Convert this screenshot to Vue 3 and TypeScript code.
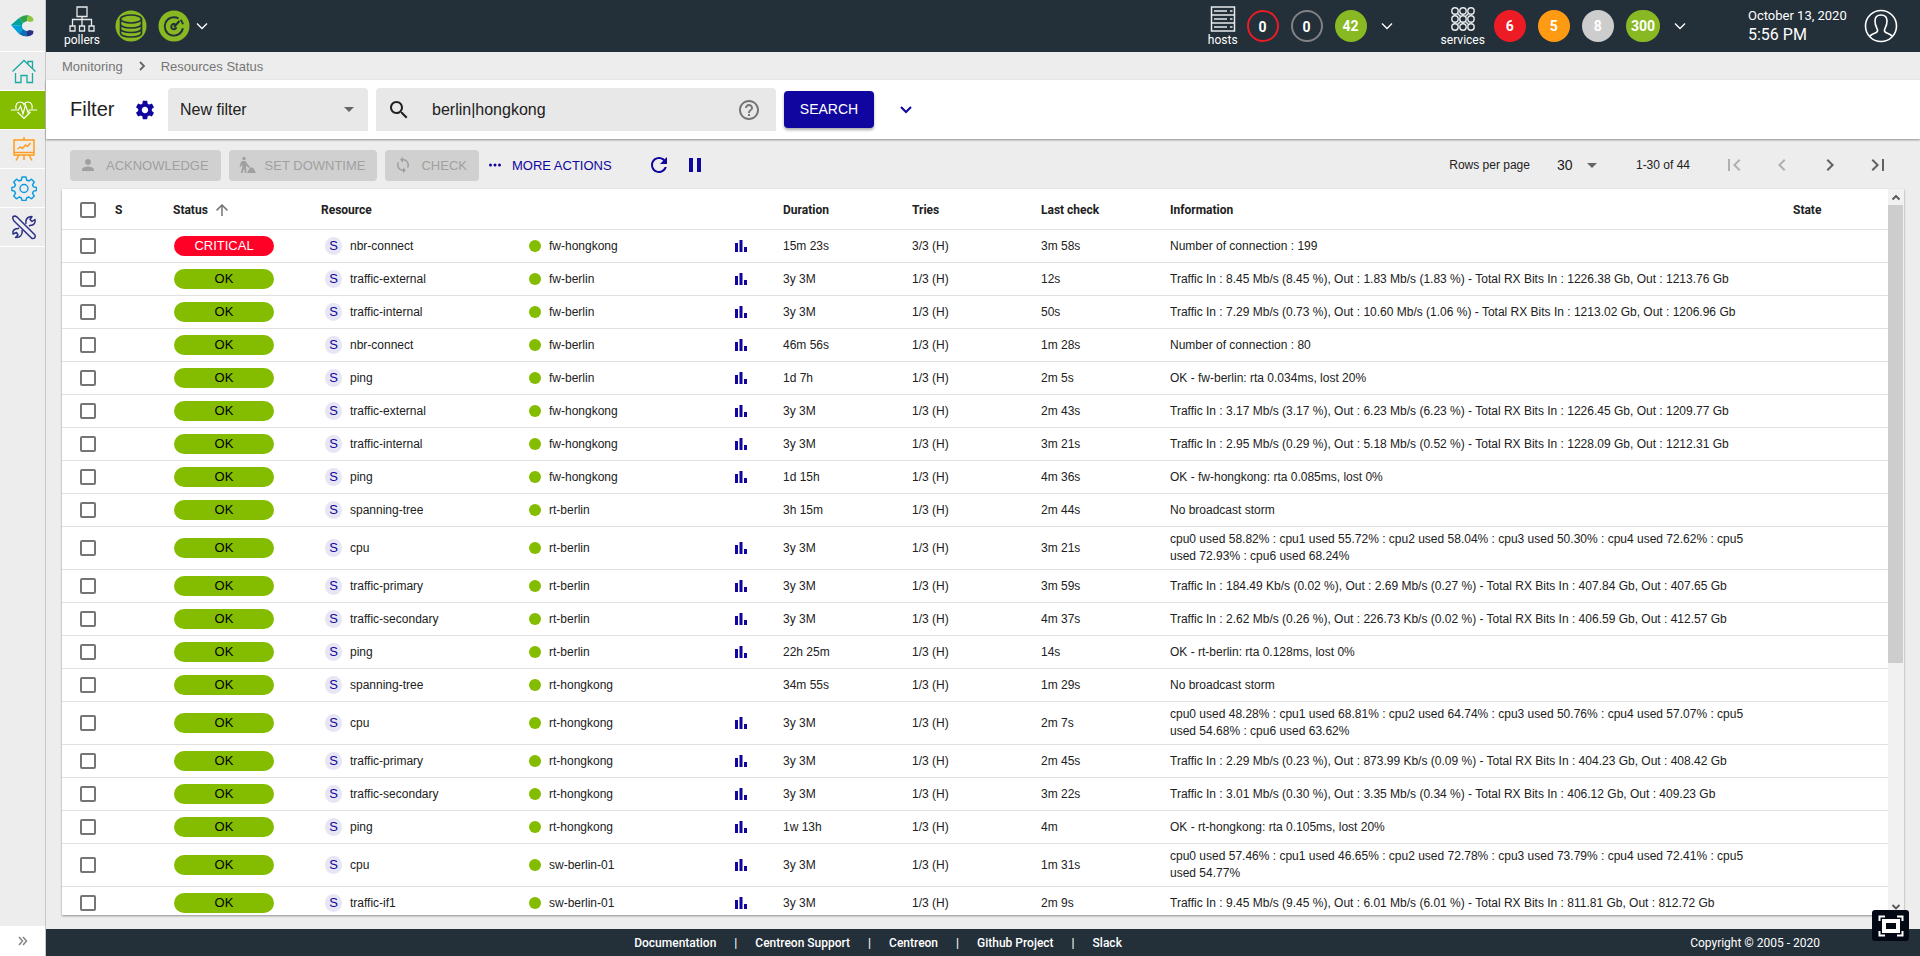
<script setup lang="ts">
import { ref } from 'vue'

interface Resource {
  status: 'CRITICAL' | 'OK'
  name: string
  parent: string
  graph: boolean
  duration: string
  tries: string
  lastCheck: string
  information: string
}

function row(
  name: string,
  parent: string,
  duration: string,
  lastCheck: string,
  information: string,
  graph = true,
  status: Resource['status'] = 'OK',
  tries = '1/3 (H)',
): Resource {
  return { status, name, parent, graph, duration, tries, lastCheck, information }
}

const resources: Resource[] = [
  row('nbr-connect', 'fw-hongkong', '15m 23s', '3m 58s', 'Number of connection : 199', true, 'CRITICAL', '3/3 (H)'),
  row('traffic-external', 'fw-berlin', '3y 3M', '12s', 'Traffic In : 8.45 Mb/s (8.45 %), Out : 1.83 Mb/s (1.83 %) - Total RX Bits In : 1226.38 Gb, Out : 1213.76 Gb'),
  row('traffic-internal', 'fw-berlin', '3y 3M', '50s', 'Traffic In : 7.29 Mb/s (0.73 %), Out : 10.60 Mb/s (1.06 %) - Total RX Bits In : 1213.02 Gb, Out : 1206.96 Gb'),
  row('nbr-connect', 'fw-berlin', '46m 56s', '1m 28s', 'Number of connection : 80'),
  row('ping', 'fw-berlin', '1d 7h', '2m 5s', 'OK - fw-berlin: rta 0.034ms, lost 20%'),
  row('traffic-external', 'fw-hongkong', '3y 3M', '2m 43s', 'Traffic In : 3.17 Mb/s (3.17 %), Out : 6.23 Mb/s (6.23 %) - Total RX Bits In : 1226.45 Gb, Out : 1209.77 Gb'),
  row('traffic-internal', 'fw-hongkong', '3y 3M', '3m 21s', 'Traffic In : 2.95 Mb/s (0.29 %), Out : 5.18 Mb/s (0.52 %) - Total RX Bits In : 1228.09 Gb, Out : 1212.31 Gb'),
  row('ping', 'fw-hongkong', '1d 15h', '4m 36s', 'OK - fw-hongkong: rta 0.085ms, lost 0%'),
  row('spanning-tree', 'rt-berlin', '3h 15m', '2m 44s', 'No broadcast storm', false),
  row('cpu', 'rt-berlin', '3y 3M', '3m 21s', 'cpu0 used 58.82% : cpu1 used 55.72% : cpu2 used 58.04% : cpu3 used 50.30% : cpu4 used 72.62% : cpu5 used 72.93% : cpu6 used 68.24%'),
  row('traffic-primary', 'rt-berlin', '3y 3M', '3m 59s', 'Traffic In : 184.49 Kb/s (0.02 %), Out : 2.69 Mb/s (0.27 %) - Total RX Bits In : 407.84 Gb, Out : 407.65 Gb'),
  row('traffic-secondary', 'rt-berlin', '3y 3M', '4m 37s', 'Traffic In : 2.62 Mb/s (0.26 %), Out : 226.73 Kb/s (0.02 %) - Total RX Bits In : 406.59 Gb, Out : 412.57 Gb'),
  row('ping', 'rt-berlin', '22h 25m', '14s', 'OK - rt-berlin: rta 0.128ms, lost 0%'),
  row('spanning-tree', 'rt-hongkong', '34m 55s', '1m 29s', 'No broadcast storm', false),
  row('cpu', 'rt-hongkong', '3y 3M', '2m 7s', 'cpu0 used 48.28% : cpu1 used 68.81% : cpu2 used 64.74% : cpu3 used 50.76% : cpu4 used 57.07% : cpu5 used 54.68% : cpu6 used 63.62%'),
  row('traffic-primary', 'rt-hongkong', '3y 3M', '2m 45s', 'Traffic In : 2.29 Mb/s (0.23 %), Out : 873.99 Kb/s (0.09 %) - Total RX Bits In : 404.23 Gb, Out : 408.42 Gb'),
  row('traffic-secondary', 'rt-hongkong', '3y 3M', '3m 22s', 'Traffic In : 3.01 Mb/s (0.30 %), Out : 3.35 Mb/s (0.34 %) - Total RX Bits In : 406.12 Gb, Out : 409.23 Gb'),
  row('ping', 'rt-hongkong', '1w 13h', '4m', 'OK - rt-hongkong: rta 0.105ms, lost 20%'),
  row('cpu', 'sw-berlin-01', '3y 3M', '1m 31s', 'cpu0 used 57.46% : cpu1 used 46.65% : cpu2 used 72.78% : cpu3 used 73.79% : cpu4 used 72.41% : cpu5 used 54.77%'),
  row('traffic-if1', 'sw-berlin-01', '3y 3M', '2m 9s', 'Traffic In : 9.45 Mb/s (9.45 %), Out : 6.01 Mb/s (6.01 %) - Total RX Bits In : 811.81 Gb, Out : 812.72 Gb'),
]

const query = ref('berlin|hongkong')
const filter = ref('New filter')
const perPage = ref(30)
const footerLinks = ['Documentation', 'Centreon Support', 'Centreon', 'Github Project', 'Slack']
const serviceDots = [5, 13, 21]
</script>

<template>
  <div class="app">
    <nav class="side" aria-label="Main">
      <a href="#" class="logo" aria-label="Centreon">
        <svg width="24" height="22" viewBox="0 0 24 22">
          <path d="M8 3 Q12 0 17 0 L16 6 L12 8 Z" fill="#2fa14a" />
          <path d="M17 0 Q20 1 22 3 L22.500 6 L19 7 L16 6 Z" fill="#8cc63f" />
          <path d="M0 10 L8 3 L12 8 Q11 9 11 11 Z" fill="#00a39a" />
          <path d="M0 10 L11 11 Q11 13 12 14 L8 19 Z" fill="#00a0df" />
          <path d="M8 19 L12 14 Q14 16 16 16 L16 21.500 Q12 21.500 8 19 Z" fill="#0b6fb8" />
          <path d="M16 16 L19 15 L22.500 16 L22 19 Q20 21 16 21.500 Z" fill="#2b2f86" />
        </svg>
      </a>
      <a href="#" class="item" aria-label="Home">
        <svg width="26" height="26" viewBox="0 0 26 26" fill="none" stroke="#1ba9a0" stroke-width="1.3">
          <path d="M1.500 13.500 L13 2.500 L24.500 13.500 M17 6 V3.500 h4.500 v7 M4.500 15 V24.500 h5.500 v-7 h6 V24.500 h5.500 v-9.500" />
        </svg>
      </a>
      <a href="#" class="item active" aria-label="Monitoring">
        <svg width="26" height="26" viewBox="0 0 26 26" fill="none" stroke="#fff" stroke-width="1.2">
          <path d="M5 12 C4 7 7 5 9 5 c2 0 3.500 1 4 2.500 C13.500 6 15 5 17 5 c3 0 5 3 4 7 M6.500 15 L13 21.500 L19.500 15" />
          <path d="M0 13 h7.500 l2-4 l2.500 8 l2.500-9 l2.500 7.500 l1.500-2.500 H26" />
        </svg>
      </a>
      <a href="#" class="item" aria-label="Reporting">
        <svg width="26" height="26" viewBox="0 0 26 26" fill="none" stroke="#ff9c1b" stroke-width="1.5">
          <path d="M3 4 h20 v15 H3 z M3 16.500 h20 M13 1 v3 M8 19 l-3 5.500 M18 19 l3 5.500 M13 19 v5" />
          <path d="M6.500 13 l3-2 l2 1.500 l3-3.500 l2 1.500 l3-3.500" />
        </svg>
      </a>
      <a href="#" class="item" aria-label="Configuration">
        <svg width="26" height="26" viewBox="0 0 26 26" fill="none" stroke="#0d9be0" stroke-width="1.4" stroke-linejoin="round">
          <path d="M11 2 h4 l.6 3 2.300 1 2.600-1.800 2.800 2.800 -1.800 2.600 1 2.300 3 .6 v3 l-3 .6 -1 2.300 1.800 2.600 -2.800 2.800 -2.600-1.800 -2.300 1 -.6 2.500 h-4 l-.6-2.500 -2.300-1 -2.600 1.800 -2.800-2.800 1.800-2.600 -1-2.300 -2.600-.6 v-3 l2.600-.6 1-2.300 -1.800-2.600 2.800-2.800 2.600 1.800 2.300-1 z" />
          <circle cx="13" cy="13.500" r="4" />
        </svg>
      </a>
      <a href="#" class="item" aria-label="Administration">
        <svg width="26" height="26" viewBox="0 0 26 26" fill="none" stroke="#2b2f86" stroke-width="1.500" stroke-linejoin="round">
          <path d="M2 5 Q1 2 4 2 L6 3 L24 21 Q25 25 21 24.500 L3 7 Z" />
          <path d="M15 10 Q14 5 18 3 L21 2.500 L19 5.500 L21 7.500 L24 5.500 Q25 11 19 11.500 L18 12 M11 16 Q12 21 8 23 L4.500 23.500 L7 21 L5.500 18.500 L2 20 Q1 15 7 14.500 L8 14" />
        </svg>
      </a>
      <button class="expand" aria-label="Expand menu">
        <svg width="10" height="10" viewBox="0 0 10 10" fill="none" stroke="#888" stroke-width="1.600"><path d="M1 1 l3.500 4 L1 9 M5 1 l3.500 4 L5 9" /></svg>
      </button>
    </nav>

    <div class="page">
      <header class="top">
        <div class="group pollers">
          <a href="#" class="labelled">
            <svg width="26" height="26" viewBox="0 0 26 26" fill="none" stroke="#e8eaec" stroke-width="1.300">
              <path d="M8 1 h10 v9.500 H8 z M13 10.500 V20 M3.500 20 v-6.500 h19 V20 M1 20 h5 v5 H1 z M10.500 20 h5 v5 h-5 z M20 20 h5 v5 h-5 z" />
            </svg>
            <span>pollers</span>
          </a>
          <a href="#" class="round" aria-label="Database">
            <svg width="32" height="32" viewBox="0 0 32 32">
              <circle cx="16" cy="16" r="15.500" fill="#88b922" />
              <g fill="none" stroke="#232f39" stroke-width="1.600">
                <ellipse cx="16" cy="9" rx="10.500" ry="4" />
                <path d="M5.500 9 v14 c0 5.300 21 5.300 21 0 V9 M5.500 14 c0 5.300 21 5.300 21 0 M5.500 18.500 c0 5.300 21 5.300 21 0" />
              </g>
            </svg>
          </a>
          <a href="#" class="round" aria-label="Latency">
            <svg width="32" height="32" viewBox="0 0 32 32">
              <circle cx="16" cy="16" r="15.500" fill="#88b922" />
              <g fill="none" stroke="#232f39">
                <path d="M24.900 18.300 A9.200 9.200 0 1 1 20.600 8.500 M22.500 9.900 A9.200 9.200 0 0 1 25 14.300" stroke-width="1.900" />
                <path d="M17.800 15 A2.600 2.600 0 1 0 18.300 17.300" stroke-width="1.900" />
                <path d="M16 17 L21.500 11" stroke-width="2" />
              </g>
            </svg>
          </a>
          <button class="chev" aria-label="Pollers details">
            <svg width="12" height="8" viewBox="0 0 12 8" fill="none" stroke="#fff" stroke-width="1.300"><path d="M1 1.500 l5 5 l5-5" /></svg>
          </button>
        </div>

        <div class="group hosts">
          <a href="#" class="labelled">
            <svg width="26" height="26" viewBox="0 0 26 26" fill="none" stroke="#e8eaec" stroke-width="1.500">
              <path d="M1.500 1 h23 v24 h-23 z M1.500 9 h23 M1.500 17 h23 M4 5 h13 M4 13 h13 M4 21 h13 M20 5 h2.500 M20 13 h2.500 M20 21 h2.500" />
            </svg>
            <span>hosts</span>
          </a>
          <a href="#" class="badge ring-red">0</a>
          <a href="#" class="badge ring-grey">0</a>
          <a href="#" class="badge green">42</a>
          <button class="chev" aria-label="Hosts details">
            <svg width="12" height="8" viewBox="0 0 12 8" fill="none" stroke="#fff" stroke-width="1.300"><path d="M1 1.500 l5 5 l5-5" /></svg>
          </button>
        </div>

        <div class="group services">
          <a href="#" class="labelled">
            <svg width="26" height="26" viewBox="0 0 26 26" fill="none" stroke="#e8eaec" stroke-width="1.400">
              <path d="M7 7 L19 19 M19 7 L7 19 M13 8 V18" />
              <template v-for="y in serviceDots" :key="y">
                <circle v-for="x in serviceDots" :key="x" :cx="x" :cy="y" r="3.200" fill="#232f39" />
              </template>
            </svg>
            <span>services</span>
          </a>
          <a href="#" class="badge red">6</a>
          <a href="#" class="badge orange">5</a>
          <a href="#" class="badge grey">8</a>
          <a href="#" class="badge green">300</a>
          <button class="chev" aria-label="Services details">
            <svg width="12" height="8" viewBox="0 0 12 8" fill="none" stroke="#fff" stroke-width="1.300"><path d="M1 1.500 l5 5 l5-5" /></svg>
          </button>
        </div>

        <div class="clock">
          <span class="date">October 13, 2020</span>
          <span class="time">5:56 PM</span>
        </div>
        <button class="user" aria-label="User profile">
          <svg width="34" height="34" viewBox="0 0 34 34" fill="none" stroke="#fff" stroke-width="1.600">
            <circle cx="17" cy="17" r="15.500" />
            <path d="M6 27.500 C7 24 13 25 13.500 22 C14 19.500 11 18 11 12 C11 8 13.500 6 17 6 C20.500 6 23 8 23 12 C23 18 20 19.500 20.500 22 C21 25 27 24 28 27.500" />
          </svg>
        </button>
      </header>

      <nav class="crumbs" aria-label="Breadcrumb">
        <a href="#">Monitoring</a>
        <svg width="8" height="10" viewBox="0 0 8 10" fill="none" stroke="#666" stroke-width="1.800"><path d="M2 1 l4 4 l-4 4" /></svg>
        <a href="#">Resources Status</a>
      </nav>

      <form class="filter" @submit.prevent>
        <h1>Filter</h1>
        <button type="button" class="gear" aria-label="Edit filters">
          <svg width="24" height="24" viewBox="0 0 24 24" fill="#10069f"><path d="M19.430 12.980c.04-.32.070-.64.070-.98s-.03-.66-.07-.98l2.110-1.650c.19-.15.240-.42.120-.64l-2-3.460c-.12-.22-.39-.3-.61-.22l-2.490 1c-.52-.4-1.080-.73-1.690-.98l-.38-2.650C14.460 2.180 14.250 2 14 2h-4c-.25 0-.46.180-.49.420l-.38 2.650c-.61.250-1.170.59-1.690.98l-2.490-1c-.23-.09-.49 0-.61.220l-2 3.460c-.13.220-.07.490.120.640l2.110 1.650c-.04.320-.07.650-.07.980s.03.660.070.980l-2.110 1.650c-.19.150-.24.420-.12.640l2 3.460c.12.220.39.300.61.220l2.490-1c.52.400 1.080.730 1.690.980l.38 2.650c.03.240.24.420.49.420h4c.25 0 .46-.18.490-.42l.38-2.650c.61-.25 1.170-.59 1.690-.98l2.490 1c.23.090.49 0 .61-.22l2-3.460c.12-.22.070-.49-.12-.64l-2.110-1.650zM12 15.500c-1.930 0-3.500-1.570-3.500-3.500s1.570-3.500 3.500-3.500 3.500 1.570 3.500 3.500-1.570 3.500-3.500 3.500z" /></svg>
        </button>
        <div class="select-wrap">
          <select v-model="filter" aria-label="Saved filter"><option>New filter</option></select>
          <svg width="10" height="5" viewBox="0 0 10 5" fill="#666"><path d="M0 0 h10 l-5 5z" /></svg>
        </div>
        <label class="search">
          <svg width="24" height="24" viewBox="0 0 24 24" fill="#212121"><path d="M15.500 14h-.79l-.28-.27C15.410 12.590 16 11.110 16 9.500 16 5.910 13.090 3 9.500 3S3 5.910 3 9.500 5.910 16 9.500 16c1.610 0 3.090-.59 4.230-1.570l.27.28v.79l5 4.990L20.490 19l-4.990-5zm-6 0C7.010 14 5 11.990 5 9.500S7.010 5 9.500 5 14 7.010 14 9.500 11.990 14 9.500 14z" /></svg>
          <input v-model="query" type="text" aria-label="Search" />
          <svg width="24" height="24" viewBox="0 0 24 24" fill="#757575"><path d="M11 18h2v-2h-2v2zm1-16C6.480 2 2 6.480 2 12s4.480 10 10 10 10-4.480 10-10S17.520 2 12 2zm0 18c-4.410 0-8-3.590-8-8s3.590-8 8-8 8 3.590 8 8-3.590 8-8 8zm0-14c-2.210 0-4 1.790-4 4h2c0-1.100.9-2 2-2s2 .9 2 2c0 2-3 1.750-3 5h2c0-2.250 3-2.500 3-5 0-2.210-1.790-4-4-4z" /></svg>
        </label>
        <button class="submit">SEARCH</button>
        <button type="button" class="more-filter" aria-label="Show criteria">
          <svg width="12" height="8" viewBox="0 0 12 8" fill="none" stroke="#10069f" stroke-width="2"><path d="M1 1 l5 5 l5-5" /></svg>
        </button>
      </form>

      <div class="actions">
        <button class="act" disabled>
          <svg width="18" height="18" viewBox="0 0 24 24"><path d="M12 12c2.210 0 4-1.790 4-4s-1.790-4-4-4-4 1.790-4 4 1.790 4 4 4zm0 2c-2.670 0-8 1.340-8 4v2h16v-2c0-2.660-5.330-4-8-4z" /></svg>
          ACKNOWLEDGE
        </button>
        <button class="act" disabled>
          <svg width="18" height="18" viewBox="0 0 18 18"><circle cx="6" cy="2.500" r="1.700" /><path d="M4 5 h3.500 l2 3 2.500 3 -1 1 -3-2.500 .5 7.500 H7 l-.8-4.500 L4.500 17 H2.800 L4.500 10 4 8.500 2.800 11 H1.500 L2.500 7z M9 17 L12 11.500 h3 L18 17z" /></svg>
          SET DOWNTIME
        </button>
        <button class="act" disabled>
          <svg width="18" height="18" viewBox="0 0 24 24"><path d="M12 4V1L8 5l4 4V6c3.310 0 6 2.690 6 6 0 1.010-.25 1.970-.7 2.800l1.460 1.460C19.540 15.030 20 13.570 20 12c0-4.420-3.580-8-8-8zm0 14c-3.310 0-6-2.690-6-6 0-1.010.25-1.970.7-2.800L5.240 7.740C4.460 8.970 4 10.430 4 12c0 4.420 3.580 8 8 8v3l4-4-4-4v3z" /></svg>
          CHECK
        </button>
        <button class="text-btn">
          <svg width="12" height="4" viewBox="0 0 12 4" fill="#10069f"><circle cx="1.500" cy="2" r="1.500" /><circle cx="6" cy="2" r="1.500" /><circle cx="10.500" cy="2" r="1.500" /></svg>
          MORE ACTIONS
        </button>
        <button class="icon refresh" aria-label="Refresh">
          <svg width="24" height="24" viewBox="0 0 24 24" fill="#10069f"><path d="M17.650 6.350C16.200 4.900 14.210 4 12 4c-4.420 0-7.990 3.580-7.990 8s3.570 8 7.990 8c3.730 0 6.840-2.550 7.730-6h-2.080c-.82 2.330-3.040 4-5.650 4-3.310 0-6-2.690-6-6s2.690-6 6-6c1.660 0 3.140.69 4.220 1.780L13 11h7V4l-2.350 2.350z" /></svg>
        </button>
        <button class="icon" aria-label="Pause">
          <svg width="24" height="24" viewBox="0 0 24 24" fill="#10069f"><path d="M6 19h4V5H6v14zm8-14v14h4V5h-4z" /></svg>
        </button>

        <div class="pager">
          <label for="per-page">Rows per page</label>
          <span class="rows">
            <select id="per-page" v-model="perPage"><option :value="30">30</option></select>
            <svg width="10" height="5" viewBox="0 0 10 5" fill="#666"><path d="M0 0 h10 l-5 5z" /></svg>
          </span>
          <span class="count">1-30 of 44</span>
          <button class="nav" disabled aria-label="First page"><svg width="24" height="24" viewBox="0 0 24 24"><path d="M18.410 16.590L13.820 12l4.590-4.590L17 6l-6 6 6 6zM6 6h2v12H6z" /></svg></button>
          <button class="nav" disabled aria-label="Previous page"><svg width="24" height="24" viewBox="0 0 24 24"><path d="M15.410 7.410L14 6l-6 6 6 6 1.410-1.410L10.830 12z" /></svg></button>
          <button class="nav" aria-label="Next page"><svg width="24" height="24" viewBox="0 0 24 24"><path d="M10 6L8.590 7.410 13.170 12l-4.580 4.590L10 18l6-6z" /></svg></button>
          <button class="nav" aria-label="Last page"><svg width="24" height="24" viewBox="0 0 24 24"><path d="M5.590 7.410L10.180 12l-4.590 4.590L7 18l6-6-6-6zM16 6h2v12h-2z" /></svg></button>
        </div>
      </div>

      <main class="card">
        <div class="viewport">
          <table>
            <colgroup>
              <col class="c-check" /><col class="c-sev" /><col class="c-status" /><col class="c-resource" />
              <col class="c-parent" /><col class="c-graph" /><col class="c-time" /><col class="c-time" />
              <col class="c-time" /><col /><col class="c-state" />
            </colgroup>
            <thead>
              <tr>
                <th class="check"><input type="checkbox" aria-label="Select all" /></th>
                <th>S</th>
                <th>
                  <span class="sort">Status
                    <svg width="12" height="12" viewBox="0 0 12 12" fill="none" stroke="#757575" stroke-width="1.500"><path d="M6 12 V1 M.6 6.400 L6 1 l5.400 5.400" /></svg>
                  </span>
                </th>
                <th>Resource</th>
                <th></th>
                <th></th>
                <th>Duration</th>
                <th>Tries</th>
                <th>Last check</th>
                <th>Information</th>
                <th>State</th>
              </tr>
            </thead>
            <tbody>
              <tr v-for="(r, i) in resources" :key="i">
                <td class="check"><input type="checkbox" :aria-label="`Select ${r.name}`" /></td>
                <td></td>
                <td><span class="pill" :class="r.status.toLowerCase()">{{ r.status }}</span></td>
                <td><span class="res"><span class="kind">S</span>{{ r.name }}</span></td>
                <td><span class="parent"><i class="dot"></i>{{ r.parent }}</span></td>
                <td class="graph">
                  <svg v-if="r.graph" width="12" height="12" viewBox="0 0 12 12" fill="#10069f"><path d="M0 3 h3 v9 H0z M4.500 0 h3 v12 h-3z M9 7 h3 v5 H9z" /></svg>
                </td>
                <td>{{ r.duration }}</td>
                <td>{{ r.tries }}</td>
                <td>{{ r.lastCheck }}</td>
                <td class="info">{{ r.information }}</td>
                <td></td>
              </tr>
            </tbody>
          </table>
        </div>
        <div class="scroll" aria-hidden="true">
          <svg width="16" height="16" viewBox="0 0 16 16" fill="none" stroke="#555" stroke-width="1.800"><path d="M4.500 10.500 l3.500-3.500 l3.500 3.500" /></svg>
          <div class="rail"><div class="thumb"></div></div>
          <svg width="16" height="16" viewBox="0 0 16 16" fill="none" stroke="#555" stroke-width="1.800"><path d="M4.500 6 l3.500 3.500 l3.500-3.500" /></svg>
        </div>
      </main>

      <footer class="foot">
        <ul>
          <li v-for="l in footerLinks" :key="l"><a href="#">{{ l }}</a></li>
        </ul>
        <span class="copy">Copyright © 2005 - 2020</span>
      </footer>
    </div>

    <button class="full" aria-label="Fullscreen">
      <svg width="26" height="22" viewBox="0 0 26 22" fill="none" stroke="#fff">
        <path d="M1.500 6 V1.500 H7 M19 1.500 h5.500 V6 M24.500 16 v4.500 H19 M7 20.500 H1.500 V16" stroke-width="2" />
        <path d="M6 6 h14 v10 H6z" stroke-width="4" />
      </svg>
    </button>
  </div>
</template>

<style>
html,
body {
  background: #ededed;
}
</style>

<style scoped>
.app {
  display: flex;
  height: 100vh;
  overflow: hidden;
  position: relative;
  background: #ededed;
  color: #212121;
  font: 12px/17px "Liberation Sans", Arial, sans-serif;
}
a { color: inherit; text-decoration: none; }
button, input, select { font: inherit; color: inherit; }
button { border: 0; padding: 0; background: none; display: flex; align-items: center; justify-content: center; }
svg { display: block; flex: none; }

.side { width: 45px; flex: none; display: flex; flex-direction: column; border-right: 1px solid #c8c8c8; }
.side a { display: flex; align-items: center; justify-content: center; border-bottom: 1px solid #fff; padding-left: 3px; }
.side .logo { height: 51px; padding: 0; }
.side .item { height: 38px; }
.side .active { background: #84bd00; }
.side .expand { margin-top: auto; height: 30px; background: #fff; }

.page { flex: 1; min-width: 0; display: flex; flex-direction: column; }
.top { height: 52px; flex: none; display: flex; align-items: center; padding: 0 22px 0 18px; background: #232f39; color: #fff; font-family: Roboto, sans-serif; }
.group { display: flex; align-items: center; }
.labelled { display: flex; flex-direction: column; align-items: center; font-size: 12px; line-height: 14px; gap: 1px; }
.round { margin-left: 11px; }
.labelled + .round { margin-left: 15px; }
.chev { width: 20px; height: 20px; margin-left: 10px; }
.pollers .chev { margin-left: 2px; }
.hosts { margin-left: auto; }
.services { margin-left: 44px; }
.badge { box-sizing: border-box; min-width: 32px; height: 32px; margin-left: 12px; border-radius: 16px; padding: 0 5px; display: flex; align-items: center; justify-content: center; font-size: 14px; font-weight: 700; }
.labelled + .badge { margin-left: 9px; }
.ring-red { border: 2px solid #ed1c24; padding-top: 3px; }
.ring-grey { border: 2px solid #818285; padding-top: 3px; }
.green { background: #88b922; }
.red { background: #ed1c24; }
.orange { background: #ff9a13; }
.grey { background: #cdcdcd; }
.clock { display: flex; flex-direction: column; margin-left: 58px; width: 116px; }
.date { font-size: 13px; line-height: 18px; }
.time { font-size: 16px; line-height: 20px; }

.crumbs { height: 28px; flex: none; display: flex; align-items: center; gap: 15px; padding-left: 16px; color: #757575; font-size: 13px; }

.filter { height: 59px; flex: none; display: flex; align-items: center; padding: 0 24px; background: #fff; box-shadow: 0 1px 2px #0006; z-index: 1; }
h1 { margin: 0; width: 64px; font-size: 20px; font-weight: 400; }
.gear svg { width: 22px; height: 22px; }
.select-wrap { width: 200px; height: 43px; margin: 0 8px 0 12px; display: grid; align-items: center; }
.select-wrap > *, .rows > * { grid-area: 1 / 1; }
.select-wrap svg { justify-self: end; margin-right: 14px; pointer-events: none; }
select { appearance: none; border: 0; background: none; width: 100%; }
.select-wrap select { height: 100%; padding: 0 12px; font-size: 16px; background: #e8e8e8; border-radius: 4px 4px 0 0; }
.search { width: 400px; height: 43px; box-sizing: border-box; padding: 0 15px 0 11px; display: flex; align-items: center; background: #e8e8e8; border-radius: 4px 4px 0 0; }
.search input { flex: 1; min-width: 0; border: 0; background: none; outline: 0; padding: 0 0 0 21px; font-size: 16px; }
.submit { width: 90px; height: 37px; margin-left: 8px; border-radius: 4px; background: #10069f; color: #fff; font-size: 14px; box-shadow: 0 2px 3px #0005; }
.more-filter { width: 24px; height: 24px; margin-left: 20px; }

.actions { box-sizing: border-box; height: 50px; flex: none; display: flex; align-items: center; padding: 2px 30px 0 24px; }
.act { height: 31px; margin-right: 8px; padding: 0 12px 0 9px; gap: 9px; border-radius: 4px; background: #d0d0d0; color: #a0a0a0; fill: #a0a0a0; font-size: 13px; }
.text-btn { margin-left: 2px; gap: 11px; color: #10069f; font-size: 13px; }
.icon { width: 24px; height: 24px; margin-left: 12px; }
.refresh { margin-left: 35px; }
.pager { margin-left: auto; display: flex; align-items: center; }
.rows { display: grid; align-items: center; width: 40px; margin: 0 39px 0 27px; }
.rows select { padding: 0; font-size: 14px; }
.rows svg { justify-self: end; }
.nav { width: 24px; height: 24px; margin-left: 24px; fill: #616161; }
.count + .nav { margin-left: 32px; }
.nav:disabled { fill: #b0b0b0; }

.card { flex: 1; min-height: 0; display: flex; margin: 0 16px 14px; background: #fff; box-shadow: 0 1px 2px #0006; }
.viewport { flex: 1; min-width: 0; overflow: hidden; }
.scroll { width: 16px; flex: none; display: flex; flex-direction: column; background: #f1f1f1; }
.rail { flex: 1; }
.thumb { height: 66%; background: #cdcdcd; margin-right: 1px; }

table { width: 100%; table-layout: fixed; border-collapse: separate; border-spacing: 0; }
th, td { box-sizing: border-box; padding: 0; text-align: left; border-bottom: 1px solid #e0e0e0; }
th { height: 41px; padding-top: 2px; font-weight: 700; font-family: Roboto, sans-serif; }
td { height: 33px; padding: 4px 0; }
.c-check { width: 53px; }
.c-sev { width: 58px; }
.c-status { width: 148px; }
.c-resource { width: 208px; }
.c-parent { width: 206px; }
.c-graph { width: 48px; }
.c-time { width: 129px; }
.c-state { width: 95px; }
.info { padding-right: 24px; }
.check { padding-left: 18px; }
input[type="checkbox"] { appearance: none; display: block; box-sizing: border-box; width: 16px; height: 16px; margin: 0; border: 2px solid #757575; border-radius: 2px; background: #fff; }
.sort { display: flex; align-items: center; gap: 8px; }
.pill { display: block; width: 100px; margin-left: 1px; border-radius: 10px; font-size: 13px; line-height: 20px; text-align: center; color: #000; background: #84bd00; }
.pill.critical { background: #ff0027; color: #fff; }
.res, .parent { display: flex; align-items: center; gap: 8px; }
.res { padding-left: 4px; }
.kind { width: 17px; height: 18px; border-radius: 9px; background: #e7e6f5; color: #10069f; font-size: 13px; line-height: 18px; text-align: center; }
.dot { width: 12px; height: 12px; border-radius: 50%; background: #84bd00; }

.foot { box-sizing: border-box; height: 27px; padding: 2px 100px 0 20px; flex: none; display: flex; align-items: center; background: #232f39; color: #fff; font-family: Roboto, sans-serif; }
.foot ul { flex: 1; display: flex; justify-content: center; margin: 0; padding: 0; list-style: none; font-weight: 500; }
.foot li + li::before { content: "|"; margin: 0 18px; }
.full { position: absolute; right: 11px; bottom: 15px; width: 37px; height: 31px; border-radius: 3px; background: #020914; }
</style>
